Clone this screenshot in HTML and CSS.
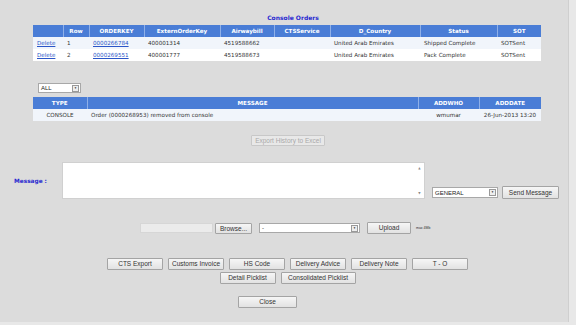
FILE: index.html
```html
<!DOCTYPE html>
<html>
<head>
<meta charset="utf-8">
<link rel="stylesheet" href="styles.css">
</head>
<body>
<div class="page">
  <div class="title">Console Orders</div>
  <table class="grid orders">
    <colgroup>
      <col style="width:30px"><col style="width:26px"><col style="width:55px"><col style="width:76px"><col style="width:54px"><col style="width:56px"><col style="width:90px"><col style="width:77px"><col style="width:44px">
    </colgroup>
    <tr class="head"><th></th><th>Row</th><th>ORDERKEY</th><th>ExternOrderKey</th><th>Airwaybill</th><th>CTSService</th><th>D_Country</th><th>Status</th><th>SOT</th></tr>
    <tr class="odd"><td><a href="#">Delete</a></td><td>1</td><td><a href="#">0000266784</a></td><td>400001314</td><td>4519588662</td><td></td><td>United Arab Emirates</td><td>Shipped Complete</td><td>SOTSent</td></tr>
    <tr class="even"><td><a href="#">Delete</a></td><td>2</td><td><a href="#">0000269551</a></td><td>400001777</td><td>4519588673</td><td></td><td>United Arab Emirates</td><td>Pack Complete</td><td>SOTSent</td></tr>
  </table>

  <div class="filter">
    <div class="sel sel-all"><span class="sel-text">ALL</span><span class="sel-btn">&#9660;</span></div>
  </div>

  <table class="grid history">
    <colgroup>
      <col style="width:54px"><col style="width:331px"><col style="width:61px"><col style="width:62px">
    </colgroup>
    <tr class="head"><th>TYPE</th><th>MESSAGE</th><th>ADDWHO</th><th>ADDDATE</th></tr>
    <tr class="odd"><td class="c">CONSOLE</td><td>Order (0000268953) removed from console</td><td class="c">wmumar</td><td class="c">26-Jun-2013 13:20</td></tr>
  </table>

  <div class="export-row"><button class="btn disabled export">Export History to Excel</button></div>

  <div class="msg-row">
    <div class="msg-label">Message :</div>
    <div class="msg-box">
      <textarea class="msg-text"></textarea>
      <div class="scroll"><span>&#9650;</span><span>&#9660;</span></div>
    </div>
    <div class="sel sel-gen"><span class="sel-text">GENERAL</span><span class="sel-btn">&#9660;</span></div>
    <button class="btn send">Send Message</button>
  </div>

  <div class="upload-row">
    <div class="file-box"></div>
    <button class="btn browse">Browse...</button>
    <div class="sel sel-doc"><span class="sel-text">-</span><span class="sel-btn">&#9660;</span></div>
    <button class="btn upload">Upload</button>
    <span class="max">max 4Mb</span>
  </div>

  <div class="btn-row row1">
    <button class="btn w56">CTS Export</button>
    <button class="btn w56">Customs Invoice</button>
    <button class="btn w56">HS Code</button>
    <button class="btn w56">Delivery Advice</button>
    <button class="btn w56">Delivery Note</button>
    <button class="btn w56">T - O</button>
  </div>
  <div class="btn-row row2">
    <button class="btn w56">Detail Picklist</button>
    <button class="btn w75">Consolidated Picklist</button>
  </div>
  <div class="close-row"><button class="btn close">Close</button></div>
</div>
</body>
</html>
```

FILE: styles.css
```css
html, body {
  margin: 0;
  padding: 0;
}
body {
  background: #e8e8e8;
  width: 576px;
  height: 325px;
  overflow: hidden;
  font-family: "DejaVu Sans", Verdana, sans-serif;
}
.page {
  width: 569px;
  height: 322px;
  background: #dcdcdc;
  border-right: 1px solid #cfcfcf;
  box-sizing: border-box;
  padding-top: 13px;
}
.title {
  text-align: center;
  color: #2a2ad0;
  font-weight: bold;
  font-size: 6px;
  height: 12px;
  line-height: 9px;
  padding-left: 18px;
}
.grid {
  border-collapse: collapse;
  table-layout: fixed;
  margin-left: 33px;
  width: 508px;
  font-size: 5.6px;
  color: #333;
}
.grid th {
  background: #4a7dd6;
  color: #fff;
  font-weight: bold;
  height: 12px;
  padding: 0;
  border-left: 1px solid #8fb0e8;
  text-align: center;
  white-space: nowrap;
}
.grid th:first-child { border-left: none; }
.grid td {
  height: 12px;
  padding: 0 0 0 4px;
  white-space: nowrap;
  overflow: hidden;
}
.grid td.c { text-align: center; padding: 0; }
.grid tr.odd td { background: #f1f5fb; }
.grid tr.even td { background: #ffffff; }
.grid a { color: #2a55c8; text-decoration: underline; }
.filter {
  margin-top: 22px;
  margin-left: 38px;
  height: 14px;
}
.sel {
  display: flex;
  background: #fff;
  border: 1px solid #a8a8a8;
  box-sizing: border-box;
  height: 10px;
  font-family: "Liberation Sans", Arial, sans-serif;
  font-size: 6px;
  color: #222;
  align-items: center;
}
.sel-text { flex: 1; padding-left: 2px; line-height: 8px; }
.sel-btn {
  width: 7px;
  height: 7px;
  margin-right: 1px;
  border: 1px solid #999;
  box-sizing: border-box;
  background: #eee;
  font-size: 3px;
  line-height: 5px;
  text-align: center;
  color: #333;
}
.sel-all { width: 43px; }
.sel-gen { width: 66px; height: 11px; margin-left: 7px; margin-top: 25px; }
.sel-doc { width: 101px; margin-left: 7px; }
.btn {
  font-family: "Liberation Sans", Arial, sans-serif;
  font-size: 6.5px;
  color: #333;
  background: linear-gradient(#f6f6f6, #e2e2e2);
  border: 1px solid #a4a4a4;
  border-radius: 1px;
  height: 12px;
  padding: 0;
  margin: 0;
  line-height: 10px;
  box-sizing: border-box;
}
.btn.disabled { color: #a8a8a8; border-color: #c8c8c8; background: #e8e8e8; }
.export-row {
  display: flex;
  margin-top: 14px;
  padding-left: 251px;
}
.export { width: 74px; height: 11px; }
.msg-row {
  display: flex;
  align-items: flex-start;
  margin-top: 16px;
  height: 38px;
}
.msg-label {
  width: 48px;
  padding-left: 14px;
  color: #2a2ad0;
  font-weight: bold;
  font-size: 5.8px;
  margin-top: 16px;
}
.msg-box {
  display: flex;
  width: 363px;
  height: 37px;
  background: #fff;
  border: 1px solid #d0d0d0;
  box-sizing: border-box;
}
.msg-text {
  flex: 1;
  border: none;
  resize: none;
  outline: none;
  padding: 0;
  margin: 0;
  background: transparent;
}
.scroll {
  width: 9px;
  display: flex;
  flex-direction: column;
  justify-content: space-between;
  font-size: 3px;
  color: #888;
  text-align: center;
  padding: 3px 0;
}
.send { width: 57px; height: 13px; margin-left: 4px; margin-top: 24px; }
.upload-row {
  display: flex;
  align-items: center;
  margin-top: 22px;
  padding-left: 140px;
  height: 12px;
}
.file-box {
  width: 73px;
  height: 10px;
  background: #ebebeb;
  border: 1px solid #d6d6d6;
  box-sizing: border-box;
}
.browse { width: 37px; height: 11px; margin-left: 2px; }
.upload { width: 44px; height: 12px; margin-left: 7px; }
.max {
  font-family: "Liberation Sans", Arial, sans-serif;
  font-size: 3.5px;
  color: #333;
  margin-left: 5px;
}
.btn-row {
  display: flex;
  justify-content: center;
  gap: 5px;
  padding-left: 7px;
}
.row1 { margin-top: 24px; }
.row2 { margin-top: 2px; }
.w56 { width: 56px; }
.w75 { width: 75px; }
.close-row {
  display: flex;
  margin-top: 12px;
  padding-left: 238px;
}
.close { width: 59px; }
```
